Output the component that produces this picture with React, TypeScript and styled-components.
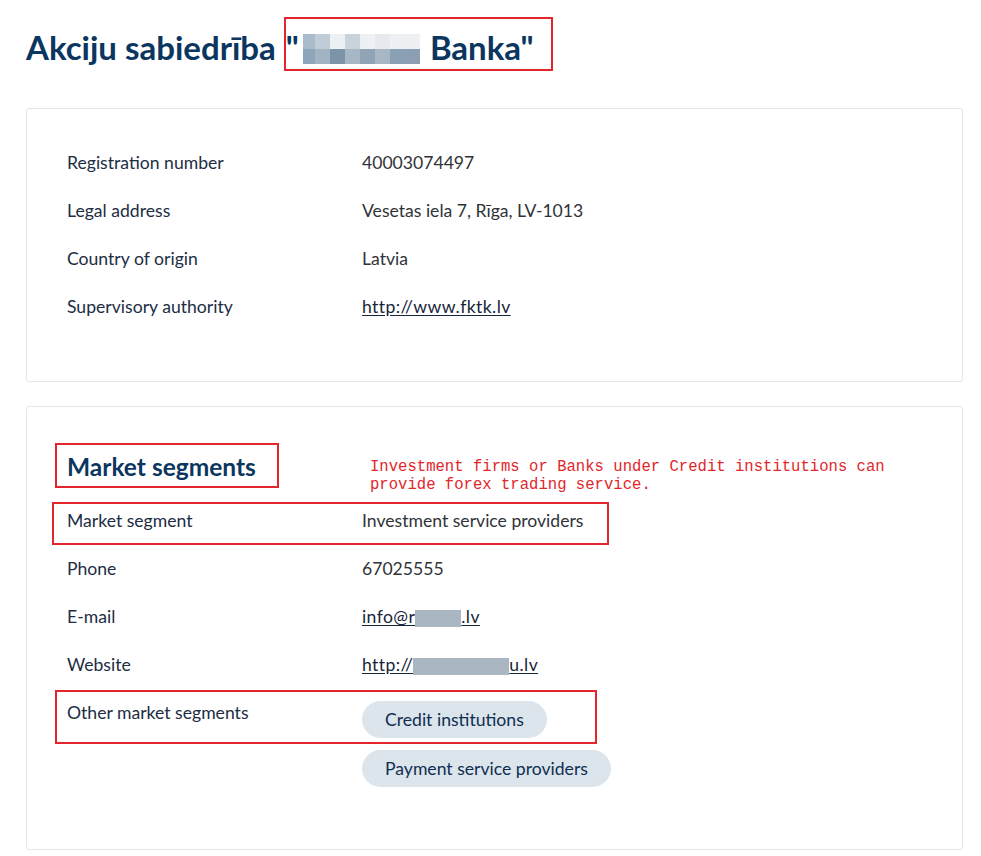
import React from 'react';
import styled, { createGlobalStyle } from 'styled-components';

const GlobalStyle = createGlobalStyle`
  html, body {
    margin: 0;
    padding: 0;
    background: #ffffff;
  }
  body {
    font-family: Lato, "Noto Sans", Arial, sans-serif;
    -webkit-font-smoothing: antialiased;
  }
`;

const Page = styled.div`
  position: relative;
  width: 981px;
  min-height: 856px;
  padding: 26px 18px 0 26px;
  box-sizing: border-box;
`;

const Title = styled.h1`
  margin: 0 0 40px 0;
  font-size: 33px;
  line-height: 42px;
  font-weight: 700;
  color: #0b3660;
  display: flex;
  align-items: center;
  white-space: pre;
`;

const Quote = styled.span`
  margin-left: 10px;
`;

const Mosaic = styled.span`
  display: inline-grid;
  grid-template-columns: 12px repeat(7, 15px);
  grid-template-rows: 15px 15px;
  margin: 0 10px 0 4px;
  transform: translateY(2px);
`;

const Cell = styled.span<{ $c: string }>`
  background: ${(p) => p.$c};
`;

const Card = styled.section<{ $top?: number }>`
  width: 937px;
  box-sizing: border-box;
  border: 1px solid #e4e6e9;
  border-radius: 3px;
  padding: ${(p) => p.$top ?? 42}px 40px 62px 40px;
  margin-bottom: 24px;
`;

const SectionHeading = styled.h2`
  margin: 0 0 27px 0;
  font-size: 24.5px;
  line-height: 30px;
  font-weight: 700;
  color: #0b3660;
`;

const Grid = styled.dl`
  margin: 0;
  display: grid;
  grid-template-columns: 295px 1fr;
  row-gap: 24px;
  font-size: 17.6px;
  line-height: 24px;
`;

const Label = styled.dt`
  margin: 0;
  color: #1c2d44;
`;

const Value = styled.dd`
  margin: 0;
  color: #2f3338;
  display: flex;
  flex-direction: column;
  align-items: flex-start;
`;

const Link = styled.a`
  color: #17263a;
  text-decoration: underline;
  text-underline-offset: 2px;
  letter-spacing: 0.4px;
  display: inline-flex;
  align-items: center;
`;

const Blur = styled.span<{ $w: number }>`
  display: inline-block;
  width: ${(p) => p.$w}px;
  height: 17px;
  background: #aab6c1;
  transform: translateY(1px);
`;

const ChipList = styled.div`
  display: flex;
  flex-direction: column;
  align-items: flex-start;
  gap: 12px;
`;

const Chip = styled.span`
  display: inline-block;
  padding: 7px 23px 6px 23px;
  border-radius: 19px;
  background: #dce4ec;
  color: #0f2f52;
  font-size: 17.6px;
  line-height: 24px;
`;

const RedBox = styled.div<{ $x: number; $y: number; $w: number; $h: number }>`
  position: absolute;
  left: ${(p) => p.$x}px;
  top: ${(p) => p.$y}px;
  width: ${(p) => p.$w}px;
  height: ${(p) => p.$h}px;
  box-sizing: border-box;
  border: 2px solid #e2262b;
  pointer-events: none;
`;

const Note = styled.div`
  position: absolute;
  left: 370px;
  top: 458px;
  width: 540px;
  font-family: "Liberation Mono", "DejaVu Sans Mono", monospace;
  font-size: 15.6px;
  line-height: 18px;
  color: #e2262b;
`;

const top = ['#a9bccb', '#c0cdd8', '#eef1f4', '#c9d3dc', '#eef1f4', '#e6eaee', '#eef1f4', '#eef1f4'];
const bottom = ['#8ea6ba', '#a2b3c3', '#7d93aa', '#a7b7c6', '#91a4b6', '#a8b7c4', '#8aa0b4', '#8c9fb2'];

const details = [
  { label: 'Registration number', value: '40003074497' },
  { label: 'Legal address', value: 'Vesetas iela 7, Rīga, LV-1013' },
  { label: 'Country of origin', value: 'Latvia' },
];

export default function App() {
  return (
    <>
      <GlobalStyle />
      <Page>
        <Title>
          Akciju sabiedrība<Quote>"</Quote>
          <Mosaic>
            {top.map((c, i) => (
              <Cell key={'t' + i} $c={c} />
            ))}
            {bottom.map((c, i) => (
              <Cell key={'b' + i} $c={c} />
            ))}
          </Mosaic>
          Banka"
        </Title>

        <Card>
          <Grid>
            {details.map((d) => (
              <React.Fragment key={d.label}>
                <Label>{d.label}</Label>
                <Value>{d.value}</Value>
              </React.Fragment>
            ))}
            <Label>Supervisory authority</Label>
            <Value>
              <Link href="#">http://www.fktk.lv</Link>
            </Value>
          </Grid>
        </Card>

        <Card $top={45}>
          <SectionHeading>Market segments</SectionHeading>
          <Grid>
            <Label>Market segment</Label>
            <Value>Investment service providers</Value>
            <Label>Phone</Label>
            <Value>67025555</Value>
            <Label>E-mail</Label>
            <Value>
              <Link href="#">
                info@r<Blur $w={46} />.lv
              </Link>
            </Value>
            <Label>Website</Label>
            <Value>
              <Link href="#">
                http://<Blur $w={96} />u.lv
              </Link>
            </Value>
            <Label>Other market segments</Label>
            <Value>
              <ChipList>
                <Chip>Credit institutions</Chip>
                <Chip>Payment service providers</Chip>
              </ChipList>
            </Value>
          </Grid>
        </Card>

        <Note>
          Investment firms or Banks under Credit institutions can provide forex trading service.
        </Note>
        <RedBox $x={284} $y={17} $w={269} $h={54} />
        <RedBox $x={55} $y={443} $w={224} $h={45} />
        <RedBox $x={52} $y={502} $w={557} $h={43} />
        <RedBox $x={55} $y={690} $w={542} $h={54} />
      </Page>
    </>
  );
}
